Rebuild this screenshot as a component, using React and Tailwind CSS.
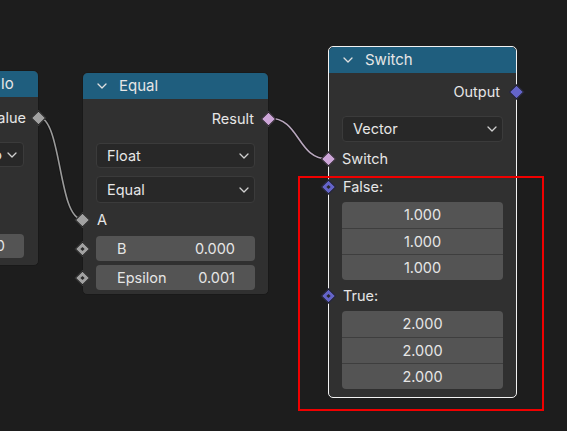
import React from 'react';

const font = { fontFamily: 'Inter, "Noto Sans", sans-serif' };

function Chevron({ className = '' }) {
  return (
    <svg width="10" height="6" viewBox="0 0 10 6" className={className}>
      <path d="M1 1 L5 5 L9 1" fill="none" stroke="currentColor" strokeWidth="1.3" strokeLinecap="round" strokeLinejoin="round" />
    </svg>
  );
}

// socket diamond, centred on the node edge
function Socket({ color, dot = false, side = 'left' }) {
  const pos = side === 'left' ? 'left-[-6px]' : 'right-[-6px]';
  return (
    <div className={`absolute ${pos} top-1/2 -translate-y-1/2 w-[11px] h-[11px] rotate-45 border border-[#1a1a1a] flex items-center justify-center`} style={{ background: color }}>
      {dot && <div className="w-[3px] h-[3px] bg-[#2a2a2a]" />}
    </div>
  );
}

function Dropdown({ label, className = '' }) {
  return (
    <div className={`flex items-center justify-between rounded-[4px] bg-[#282828] border border-[#3b3b3b] pl-[10px] pr-[5px] ${className}`}>
      <span>{label}</span>
      <Chevron className="text-[#d0d0d0]" />
    </div>
  );
}

function Header({ title }) {
  return (
    <div className="h-[26px] bg-[#1f5e7e] rounded-t-[5px] flex items-center pl-[14px] gap-[12px] text-[15px] text-[#e6e6e6]">
      <Chevron className="text-[#e0e0e0]" />
      <span>{title}</span>
    </div>
  );
}

function VectorFields({ values }) {
  return (
    <div className="mx-[13px] rounded-[4px] overflow-hidden bg-[#545454] flex flex-col">
      {values.map((v, i) => (
        <div key={i} className={`h-[26px] flex items-center justify-center ${i > 0 ? 'border-t border-[#3e3e3e]' : ''}`}>
          {v}
        </div>
      ))}
    </div>
  );
}

const GREY = '#a1a1a1';
const PINK = '#cda6d8';
const PURPLE = '#6464c9';

export default function App() {
  return (
    <div className="relative w-[567px] h-[431px] overflow-hidden bg-[#1d1d1d] text-[14.5px] text-[#e6e6e6]" style={font}>
      {/* links */}
      <svg className="absolute inset-0" width="567" height="431">
        <path d="M38 117 C 62 117, 58 219, 82 219" fill="none" stroke="#111" strokeWidth="3.5" opacity="0.6" />
        <path d="M38 117 C 62 117, 58 219, 82 219" fill="none" stroke="#9a9a9a" strokeWidth="1.6" />
        <path d="M269 118 C 300 118, 297 159, 328 159" fill="none" stroke="#111" strokeWidth="3.5" opacity="0.6" />
        <path d="M269 118 C 300 118, 297 159, 328 159" fill="none" stroke="#b7a6bc" strokeWidth="1.6" />
      </svg>

      {/* partially visible node on the left */}
      <div className="absolute left-[-60px] top-[70px] w-[99px] h-[196px] rounded-[5px] bg-[#303030] border border-[#191919] flex flex-col">
        <div className="h-[26px] bg-[#1f5e7e] rounded-t-[5px] flex items-center pl-[60px] text-[15px] text-[#e6e6e6]">
          <span>lo</span>
        </div>
        <div className="relative h-[30px] mt-[6px] flex items-center justify-end pr-[12px]">
          <span>Value</span>
          <Socket color={GREY} side="right" />
        </div>
        <div className="h-[25px] mt-[9px] ml-[10px] mr-[14px] rounded-[4px] bg-[#282828] border border-[#3b3b3b] flex items-center justify-end gap-[5px] pr-[6px]">
          <span>Auto</span>
          <Chevron className="text-[#d0d0d0]" />
        </div>
        <div className="h-[24px] mt-[67px] ml-[10px] mr-[14px] rounded-[4px] bg-[#545454] flex items-center justify-end pr-[19px]">
          0.0
        </div>
      </div>

      {/* Equal node */}
      <div className="absolute left-[82px] top-[72px] w-[187px] h-[223px] rounded-[5px] bg-[#303030] border border-[#191919] flex flex-col">
        <Header title="Equal" />
        <div className="relative h-[28px] mt-[6px] flex items-center justify-end pr-[14px]">
          <span>Result</span>
          <Socket color={PINK} side="right" />
        </div>
        <Dropdown label="Float" className="h-[25px] mt-[10px] mx-[13px]" />
        <Dropdown label="Equal" className="h-[27px] mt-[8px] mx-[13px]" />
        <div className="relative h-[28px] mt-[3px] flex items-center pl-[14px]">
          <span>A</span>
          <Socket color={GREY} />
        </div>
        <div className="relative h-[25px] mt-[2px]">
          <Socket color={GREY} dot />
          <div className="h-full mx-[13px] rounded-[4px] bg-[#545454] flex items-center justify-between pl-[21px] pr-[20px]">
            <span>B</span>
            <span>0.000</span>
          </div>
        </div>
        <div className="relative h-[25px] mt-[4px]">
          <Socket color={GREY} dot />
          <div className="h-full mx-[13px] rounded-[4px] bg-[#545454] flex items-center justify-between pl-[21px] pr-[20px]">
            <span>Epsilon</span>
            <span>0.001</span>
          </div>
        </div>
      </div>

      {/* Switch node (selected) */}
      <div className="absolute left-[328px] top-[46px] w-[189px] h-[352px] rounded-[5px] bg-[#303030] border border-[#f2f2f2] flex flex-col">
        <Header title="Switch" />
        <div className="relative h-[26px] mt-[6px] flex items-center justify-end pr-[16px]">
          <span>Output</span>
          <Socket color={PURPLE} side="right" />
        </div>
        <Dropdown label="Vector" className="h-[26px] mt-[11px] mx-[13px]" />
        <div className="relative h-[26px] mt-[4px] flex items-center pl-[13px]">
          <span>Switch</span>
          <Socket color={PINK} />
        </div>
        <div className="relative h-[26px] mt-[2px] flex items-center pl-[14px]">
          <span>False:</span>
          <Socket color={PURPLE} dot />
        </div>
        <div className="mt-[2px]">
          <VectorFields values={['1.000', '1.000', '1.000']} />
        </div>
        <div className="relative h-[26px] mt-[3px] flex items-center pl-[14px]">
          <span>True:</span>
          <Socket color={PURPLE} dot />
        </div>
        <div className="mt-[2px]">
          <VectorFields values={['2.000', '2.000', '2.000']} />
        </div>
      </div>

      {/* highlight frame */}
      <div className="absolute left-[298px] top-[176px] w-[246px] h-[235px] border-2 border-[#f00000]" />
    </div>
  );
}
